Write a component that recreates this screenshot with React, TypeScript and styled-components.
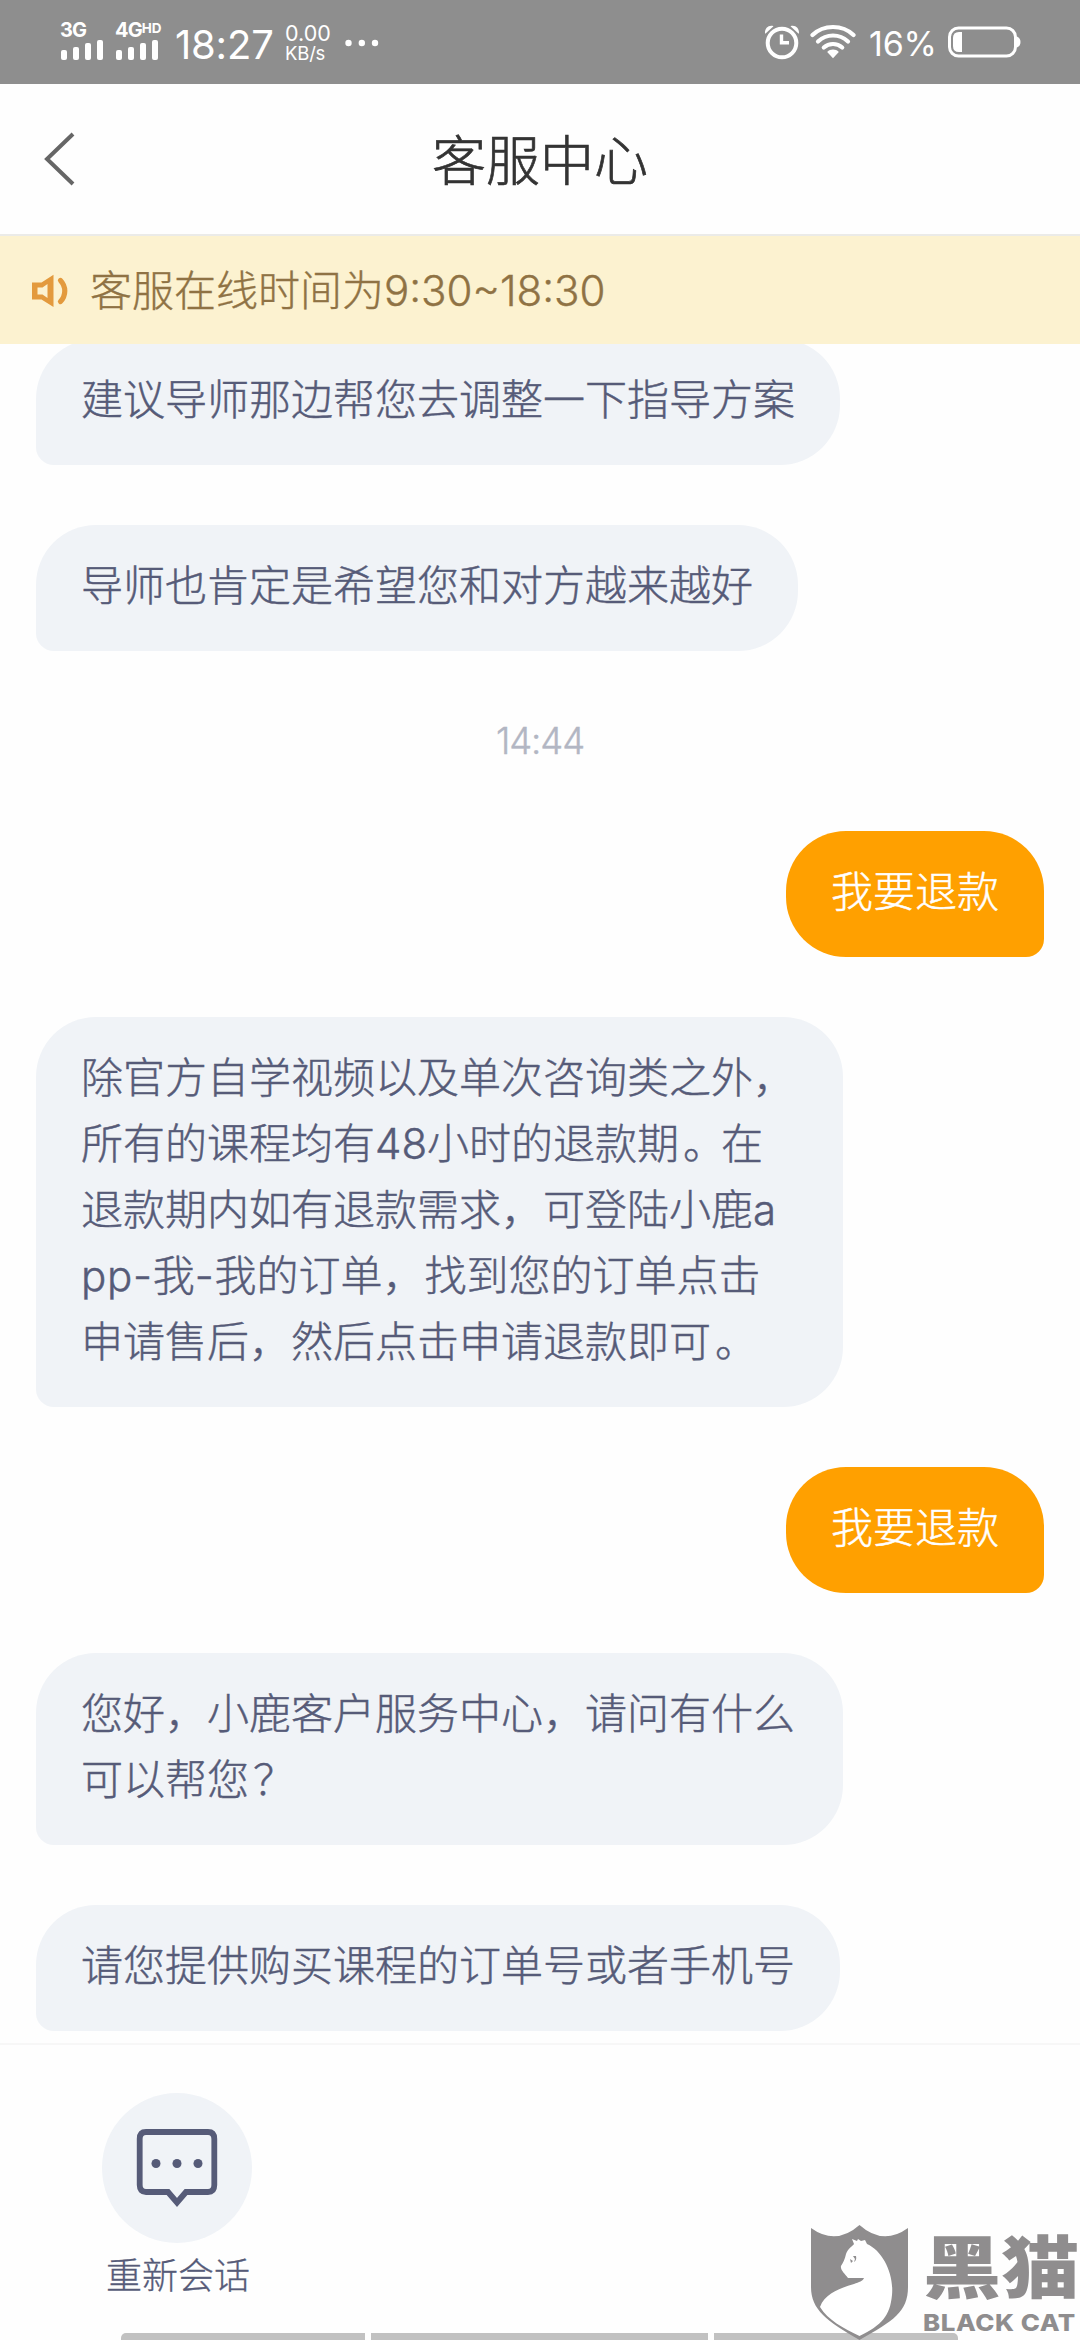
import React from 'react';
import styled, { createGlobalStyle } from 'styled-components';

const GlobalStyle = createGlobalStyle`
  *, *::before, *::after { box-sizing: border-box; }
  html, body { margin: 0; padding: 0; background: #fefefe; }
  body { font-family: Inter, "Noto Sans CJK SC", sans-serif; font-weight: 300; overflow: hidden; }
  svg { display: block; flex: none; }
`;

const Screen = styled.main`
  position: relative;
  display: flex;
  flex-direction: column;
  width: 1080px;
  height: 2340px;
  overflow: hidden;
  background: #fefefe;
`;

const StatusBar = styled.header`
  display: flex;
  justify-content: space-between;
  flex: none;
  height: 84px;
  padding: 0 59px 0 60px;
  background: #8e8e8e;
  color: #fff;
`;

const StatusGroup = styled.div`
  display: flex;
  align-items: center;
  height: 84px;
`;

const Signal = styled.div`
  display: flex;
  flex-direction: column;
  width: 55px;
`;

const Network = styled.span`
  display: flex;
  align-items: flex-start;
  height: 15px;
  font-size: 20px;
  font-weight: 700;
  line-height: 12px;
  letter-spacing: -0.9px;
`;

const NetworkSuffix = styled.small`
  font-size: 13.5px;
  line-height: 8px;
  letter-spacing: 0;
`;

const Clock = styled.time`
  width: 115px;
  padding-left: 5px;
  font-size: 40px;
  font-weight: 400;
  line-height: 48px;
  margin-top: 5px;
  letter-spacing: -0.2px;
`;

const Speed = styled.div`
  width: 60px;
  margin-top: 2px;
  font-size: 21.5px;
  font-weight: 400;
  line-height: 20px;
`;

const SpeedUnit = styled.div`
  font-size: 18.5px;
  line-height: 20px;
  letter-spacing: -0.2px;
`;

const Percent = styled.span`
  width: 91px;
  padding-left: 13px;
  margin-top: 3px;
  font-size: 34px;
  font-weight: 400;
  letter-spacing: -0.2px;
`;

const TitleBar = styled.nav`
  display: grid;
  grid-template-columns: 120px 1fr 120px;
  align-items: center;
  flex: none;
  height: 152px;
  border-bottom: 2px solid #ebebe8;
`;

const BackButton = styled.button`
  display: flex;
  padding: 0 0 0 43px;
  border: 0;
  background: none;
`;

const Title = styled.h1`
  margin: 0;
  padding-top: 5px;
  color: #333;
  font-size: 54px;
  font-weight: 300;
  line-height: 80px;
  text-align: center;
  -webkit-text-stroke: 0.7px currentColor;
`;

const Notice = styled.div`
  display: flex;
  align-items: center;
  flex: none;
  height: 108px;
  padding: 2px 0 0 31px;
  gap: 21px;
  background: #fcf2d0;
  color: #8f7244;
  font-size: 42px;
  line-height: 60px;
  -webkit-text-stroke: 0.4px currentColor;
`;

const Conversation = styled.section`
  display: flex;
  flex-direction: column;
  justify-content: flex-end;
  gap: 60px;
  flex: none;
  height: 1701px;
  padding: 0 36px 12px;
  overflow: hidden;
  border-bottom: 2px solid #f7f7f7;
`;

const Bubble = styled.div<{ $mine?: boolean; $wide?: boolean }>`
  flex: none;
  align-self: ${(p) => (p.$mine ? 'flex-end' : 'flex-start')};
  width: ${(p) => (p.$wide ? '807px' : 'auto')};
  padding: 28px 45px 32px;
  border-radius: ${(p) => (p.$mine ? '60px 60px 18px 60px' : '60px 60px 60px 18px')};
  background: ${(p) => (p.$mine ? '#ffa000' : '#f0f3f7')};
  color: ${(p) => (p.$mine ? '#fff' : '#565b78')};
  font-size: 42px;
  line-height: 66px;
  word-break: break-all;
  -webkit-text-stroke: 0.45px currentColor;
`;

const Latin = styled.span`
  letter-spacing: 0.7px;
`;

const Mark = styled.span`
  display: inline-block;
  transform: translateX(4px);
`;

const TimeStamp = styled.time`
  flex: none;
  align-self: center;
  height: 60px;
  color: #b2b6c3;
  font-size: 36.5px;
  line-height: 60px;
  letter-spacing: -1.1px;
  -webkit-text-stroke: 0.4px currentColor;
`;

const Footer = styled.footer`
  display: flex;
  flex: 1;
  flex-direction: column;
  justify-content: space-between;
  padding-top: 48px;
`;

const Action = styled.button`
  display: flex;
  flex-direction: column;
  align-items: center;
  width: 150px;
  margin-left: 102px;
  padding: 0;
  border: 0;
  background: none;
  color: #565b78;
  font: inherit;
  font-size: 36px;
  line-height: 66px;
  white-space: nowrap;
  -webkit-text-stroke: 0.3px currentColor;
`;

const ActionLabel = styled.span`
  padding-left: 2px;
`;

const ActionCircle = styled.span`
  display: grid;
  place-items: center;
  width: 150px;
  height: 150px;
  border-radius: 50%;
  background: #f0f3f7;
`;

const NavHints = styled.div`
  display: grid;
  grid-template-columns: 244px 337px 244px;
  gap: 6px;
  height: 7px;
  margin-left: 121px;
`;

const NavHint = styled.span`
  background: #c1c1c1;
  &:first-child { border-top-left-radius: 5px; }
  &:last-child { border-top-right-radius: 5px; }
`;

const Watermark = styled.aside`
  position: absolute;
  right: 0;
  bottom: 0;
  display: flex;
  gap: 14px;
  width: 270px;
  height: 116px;
  color: #8f8d8e;
`;

const Brand = styled.div`
  display: flex;
  flex-direction: column;
  padding-top: 5px;
`;

const BrandName = styled.strong`
  height: 78px;
  font-family: "Noto Sans CJK SC", sans-serif;
  font-size: 68px;
  font-weight: 900;
  line-height: 70px;
  white-space: nowrap;
  transform: scaleX(1.15);
  transform-origin: left;
`;

const BrandLatin = styled.span`
  font-size: 23.5px;
  font-weight: 800;
  line-height: 34px;
  white-space: nowrap;
  letter-spacing: 0.5px;
  transform: scaleX(1.1);
  transform-origin: left;
`;

const SignalBars = () => (
  <svg width="44" height="22" viewBox="0 0 44 22" fill="#fff">
    <rect x="1" y="11" width="6" height="10" rx="2" />
    <rect x="13" y="8" width="6" height="13" rx="2" />
    <rect x="25" y="4" width="6" height="17" rx="2" />
    <rect x="37" y="1" width="6" height="20" rx="2" />
  </svg>
);

const DotsIcon = () => (
  <svg width="34" height="10" viewBox="0 0 34 10" fill="#fff">
    <circle cx="3.5" cy="6" r="3.2" />
    <circle cx="16.8" cy="6" r="3.2" />
    <circle cx="30" cy="6" r="3.2" />
  </svg>
);

const AlarmIcon = () => (
  <svg width="36" height="36" viewBox="0 0 36 36" fill="none" stroke="#fff">
    <circle cx="18" cy="19" r="14.3" strokeWidth="4" />
    <path d="M17.5 10.5V18.8H25" strokeWidth="3.4" />
    <path d="M1 9.5C.6 4 5 .7 9.5 2.2L1.6 9.6ZM35 9.5C35.4 4 31 .7 26.5 2.2L34.4 9.6Z" fill="#fff" stroke="none" />
  </svg>
);

const WifiIcon = () => (
  <svg width="46" height="36" viewBox="0 0 46 36" fill="none" stroke="#fff" strokeWidth="4.2" strokeLinecap="round">
    <path d="M2.5 11C13.5 .3 32.5 .3 43.5 11" />
    <path d="M8 17.5C16.5 9.5 29.5 9.5 38 17.5" />
    <path d="M13.8 23.5C19 18.8 27 18.8 32.2 23.5" />
    <path d="M17.2 28C20.5 24.8 25.5 24.8 28.8 28L23 34.3Z" fill="#fff" stroke="none" />
  </svg>
);

const StatusGap = styled.span`
  width: 10px;
`;

const BatteryIcon = () => (
  <svg width="74" height="32" viewBox="0 0 74 32">
    <rect x="2.5" y="2" width="66" height="28" rx="9" fill="none" stroke="#fff" strokeWidth="3" />
    <path d="M15 6V26H12Q6 26 6 20V12Q6 6 12 6Z" fill="#fff" />
    <path d="M70 10.5Q73.5 12 73.500 16T70 21.5Z" fill="#fff" />
  </svg>
);

const BackIcon = () => (
  <svg width="34" height="56" viewBox="0 0 34 56" fill="none" stroke="#666" strokeWidth="4">
    <path d="M30 3L4 28L30 53" />
  </svg>
);

const SpeakerIcon = () => (
  <svg width="38" height="34" viewBox="0 0 38 34">
    <path
      d="M1 8.5H10.5L22.5 .8V33L10.5 25.5H1ZM6.5 13.5V20.5H11.5L16.5 24V10L11.5 13.5Z"
      fill="#e39a3d"
      fillRule="evenodd"
    />
    <path d="M29.5 6.5C35.2 12.5 35.2 21.5 29.5 27.5" fill="none" stroke="#e39a3d" strokeWidth="5.2" strokeLinecap="round" />
  </svg>
);

const ChatIcon = () => (
  <svg width="82" height="80" viewBox="0 0 82 80">
    <path d="M10 4H72Q78.3 4 78.3 11V57Q78.3 64 72 64H50L41 74.5L32 64H10Q3.7 64 3.7 57V11Q3.7 4 10 4Z" fill="none" stroke="#565b78" strokeWidth="5.8" />
    <g fill="#565b78">
      <circle cx="20" cy="35.5" r="4.5" />
      <circle cx="41" cy="35.5" r="4.5" />
      <circle cx="62" cy="35.5" r="4.5" />
    </g>
  </svg>
);

const CatShield = () => (
  <svg width="99" height="116" viewBox="0 0 99 116">
    <path d="M1 4Q26 22 49.5 1Q73 22 98 4V63C98 88 83 97 49.5 116C17 97 1 86 1 63Z" fill="#8f8d8e" />
    <path d="M42 15L47 17L48 15L51 17L55 16L57 20C73 27 84 50 82 71C80 92 72 101 49.5 112C33 104 18 96 10 83C15 69 31 64 44 60C49 58 53 57 54 54H38C35 50 30 46 31 42C33 39 35 35 36 30C38 24 43 22 44 20Z" fill="#fff" />
    <path d="M40 35L43 37L41 39ZM43 32H46Q47 36 44 38L45 35Z" fill="#8f8d8e" />
  </svg>
);

export default function App() {
  return (
    <>
      <GlobalStyle />
      <Screen>
        <StatusBar>
          <StatusGroup>
            <Signal>
              <Network>3G</Network>
              <SignalBars />
            </Signal>
            <Signal>
              <Network>4G<NetworkSuffix>HD</NetworkSuffix></Network>
              <SignalBars />
            </Signal>
            <Clock>18:27</Clock>
            <Speed>
              0.00
              <SpeedUnit>KB/s</SpeedUnit>
            </Speed>
            <DotsIcon />
          </StatusGroup>
          <StatusGroup>
            <AlarmIcon />
            <StatusGap />
            <WifiIcon />
            <Percent>16%</Percent>
            <BatteryIcon />
          </StatusGroup>
        </StatusBar>
        <TitleBar>
          <BackButton aria-label="返回"><BackIcon /></BackButton>
          <Title>客服中心</Title>
        </TitleBar>
        <Notice>
          <SpeakerIcon />
          <span>客服在线时间为9:30~18:30</span>
        </Notice>
        <Conversation>
          <Bubble>建议导师那边帮您去调整一下指导方案</Bubble>
          <Bubble>导师也肯定是希望您和对方越来越好</Bubble>
          <TimeStamp>14:44</TimeStamp>
          <Bubble $mine>我要退款</Bubble>
          <Bubble $wide>
            除官方自学视频以及单次咨询类之外，<br />
            所有的课程均有48小时的退款期<Mark>。</Mark>在<br />
            退款期内如有退款需求，可登陆小鹿a<br />
            <Latin>pp-</Latin>我<Latin>-</Latin>我的订单，找到您的订单点击<br />
            申请售后，然后点击申请退款即可<Mark>。</Mark>
          </Bubble>
          <Bubble $mine>我要退款</Bubble>
          <Bubble $wide>您好，小鹿客户服务中心，请问有什么可以帮您<Mark>？</Mark></Bubble>
          <Bubble>请您提供购买课程的订单号或者手机号</Bubble>
        </Conversation>
        <Footer>
          <Action>
            <ActionCircle><ChatIcon /></ActionCircle>
            <ActionLabel>重新会话</ActionLabel>
          </Action>
          <NavHints>
            <NavHint />
            <NavHint />
            <NavHint />
          </NavHints>
        </Footer>
        <Watermark>
          <CatShield />
          <Brand>
            <BrandName>黑猫</BrandName>
            <BrandLatin>BLACK CAT</BrandLatin>
          </Brand>
        </Watermark>
      </Screen>
    </>
  );
}
